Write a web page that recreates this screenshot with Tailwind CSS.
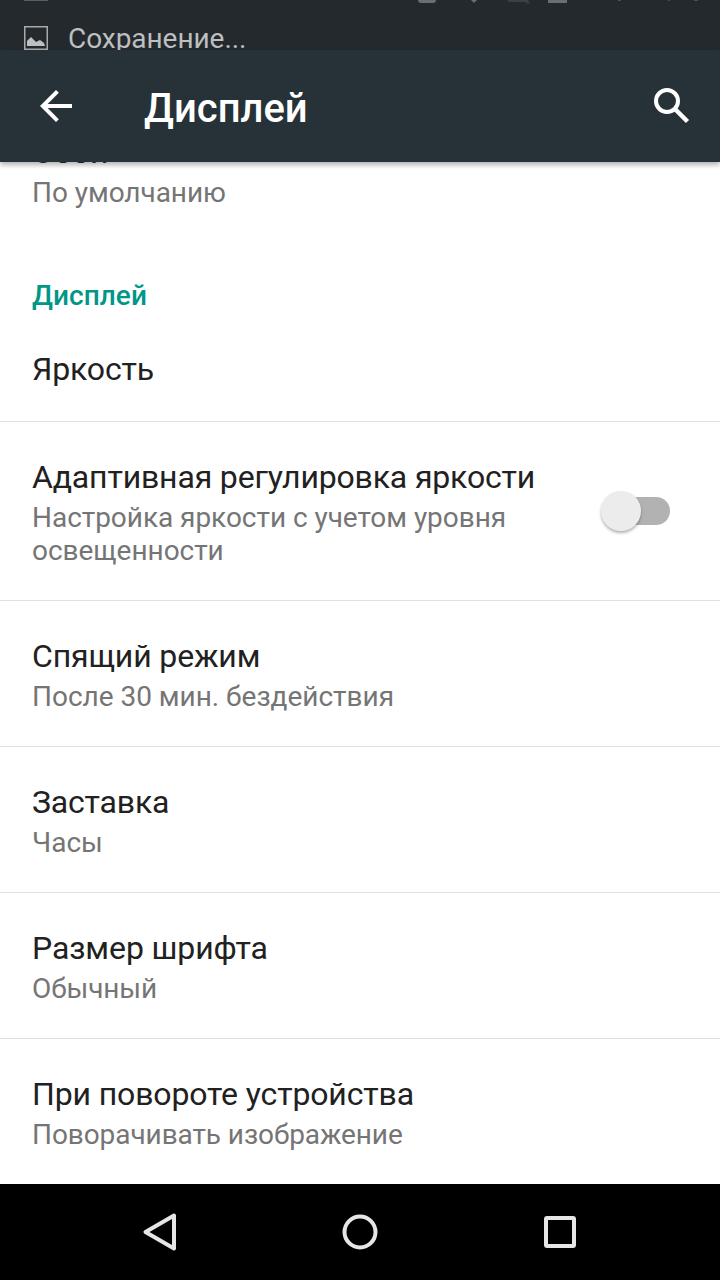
<!DOCTYPE html>
<html lang="ru">
<head>
<meta charset="utf-8">
<title>Дисплей</title>
<script src="https://cdn.jsdelivr.net/npm/@tailwindcss/browser@4"></script>
</head>
<body class="w-[720px] h-[1280px] overflow-hidden bg-white flex flex-col font-['Roboto',sans-serif] text-[#212121]">
  <div class="relative z-10 h-[50px] shrink-0 overflow-hidden bg-[#23292c]">
    <svg class="absolute inset-0" width="720" height="6" viewBox="0 0 720 6">
      <path d="M24 0h24v1H24z" fill="#5b5f61"/>
      <path d="M418 0h18q0 3-3 3h-12q-3 0-3-3zM548 0h19v3h-19z" fill="#6a6e70"/>
      <path d="M471 0h6l-3 3z" fill="#6a6e70"/>
      <path d="M507 0h21l2 3-2 1-3-2h-16z" fill="#3a4043"/>
      <path d="M618 0h3v1h-3zM668 0h2v1h-2zM694 0h4v1h-4z" fill="#4b5053"/>
    </svg>
    <div class="flex pl-6 pt-[22px] text-[#bdbfc0]">
      <svg class="mt-1 mr-5" width="24" height="24" viewBox="0 0 24 24">
        <path d="M.75.75h22.5v22.5H.75z" fill="none" stroke="#a7a9ab" stroke-width="1.5"/>
        <path d="M3 20v-5l4-4 1 1 4 4 2-1 2-1 4 3 1 3z" fill="#bdbfc0"/>
      </svg>
      <span class="text-[28px] leading-[33px] tracking-[-0.05px]">Сохранение...</span>
    </div>
  </div>
  <header class="relative z-10 flex h-28 shrink-0 items-center bg-[#273238] text-white shadow-[0_3px_5px_rgba(0,0,0,0.3)]">
    <svg class="ml-8 mb-[1px]" width="48" height="48" viewBox="0 0 24 24"><path fill="currentColor" d="M20 11H7.830l5.590-5.590L12 4l-8 8 8 8 1.410-1.410L7.830 13H20v-2z"/></svg>
    <h1 class="ml-16 mt-1 grow text-[40px] leading-[47px] font-medium">Дисплей</h1>
    <svg class="mr-6 mt-[1px]" width="48" height="48" viewBox="0 0 48 48" fill="none" stroke="currentColor"><circle cx="19" cy="18" r="11" stroke-width="4"/><path d="M27.500 26.500 39.500 38.500" stroke-width="4.500"/></svg>
  </header>
  <main class="grow min-h-0 overflow-hidden">
    <section class="relative z-20 -mt-[29px] px-8">
      <h2 class="text-[32px] leading-[38px]">Обои</h2>
      <p class="mt-[5px] text-[28px] leading-[33px] tracking-[-0.05px] text-[#757575]">По умолчанию</p>
    </section>
    <h3 class="mt-[70px] px-8 text-[28px] leading-[33px] font-medium tracking-[0.05px] text-[#009688]">Дисплей</h3>
    <section class="mt-[38px] h-[72px] px-8 border-b border-[#e0e0e0]">
      <h2 class="text-[32px] leading-[38px] tracking-[-0.15px]">Яркость</h2>
    </section>
    <section class="flex h-[179px] items-center justify-between pl-8 pr-12 border-b border-[#e0e0e0]">
      <div class="w-[520px] pt-0.5">
        <h2 class="text-[32px] leading-[38px] tracking-[-0.16px]">Адаптивная регулировка яркости</h2>
        <p class="mt-[5px] text-[28px] leading-[33px] tracking-[-0.04px] text-[#757575]">Настройка яркости с учетом уровня освещенности</p>
      </div>
      <div class="flex h-7 w-[68px] items-center rounded-full bg-[#b2b2b2] mr-[2px]">
        <div class="-ml-[1px] size-[40px] shrink-0 rounded-full bg-[#ececec] shadow-[0_2px_3px_rgba(0,0,0,0.3)]"></div>
      </div>
    </section>
    <section class="flex h-[146px] flex-col justify-center px-8 pt-0.5 border-b border-[#e0e0e0]">
      <h2 class="text-[32px] leading-[38px] tracking-[-0.13px]">Спящий режим</h2>
      <p class="mt-[5px] text-[28px] leading-[33px] tracking-[-0.02px] text-[#757575]">После 30 мин. бездействия</p>
    </section>
    <section class="flex h-[146px] flex-col justify-center px-8 pt-0.5 border-b border-[#e0e0e0]">
      <h2 class="text-[32px] leading-[38px] tracking-[-0.18px]">Заставка</h2>
      <p class="mt-[5px] text-[28px] leading-[33px] text-[#757575]">Часы</p>
    </section>
    <section class="flex h-[146px] flex-col justify-center px-8 pt-0.5 border-b border-[#e0e0e0]">
      <h2 class="text-[32px] leading-[38px] tracking-[-0.1px]">Размер шрифта</h2>
      <p class="mt-[5px] text-[28px] leading-[33px] tracking-[-0.1px] text-[#757575]">Обычный</p>
    </section>
    <section class="flex h-[146px] flex-col justify-center px-8 pt-0.5">
      <h2 class="text-[32px] leading-[38px] tracking-[-0.13px]">При повороте устройства</h2>
      <p class="mt-[5px] text-[28px] leading-[33px] tracking-[-0.08px] text-[#757575]">Поворачивать изображение</p>
    </section>
  </main>
  <nav class="relative z-10 flex h-24 shrink-0 items-center justify-center gap-[152px] bg-black text-[#e6e6e6]">
    <svg width="48" height="48" viewBox="0 0 48 48" fill="none" stroke="currentColor" stroke-width="4" stroke-linejoin="round"><path d="M38 7.500 9.500 24 38 40.500z"/></svg>
    <svg width="48" height="48" viewBox="0 0 48 48" fill="none" stroke="currentColor" stroke-width="4"><circle cx="24" cy="24" r="15.500"/></svg>
    <svg width="48" height="48" viewBox="0 0 48 48" fill="none" stroke="currentColor" stroke-width="4"><rect x="10" y="10" width="28" height="28" rx="1"/></svg>
  </nav>
</body>
</html>
